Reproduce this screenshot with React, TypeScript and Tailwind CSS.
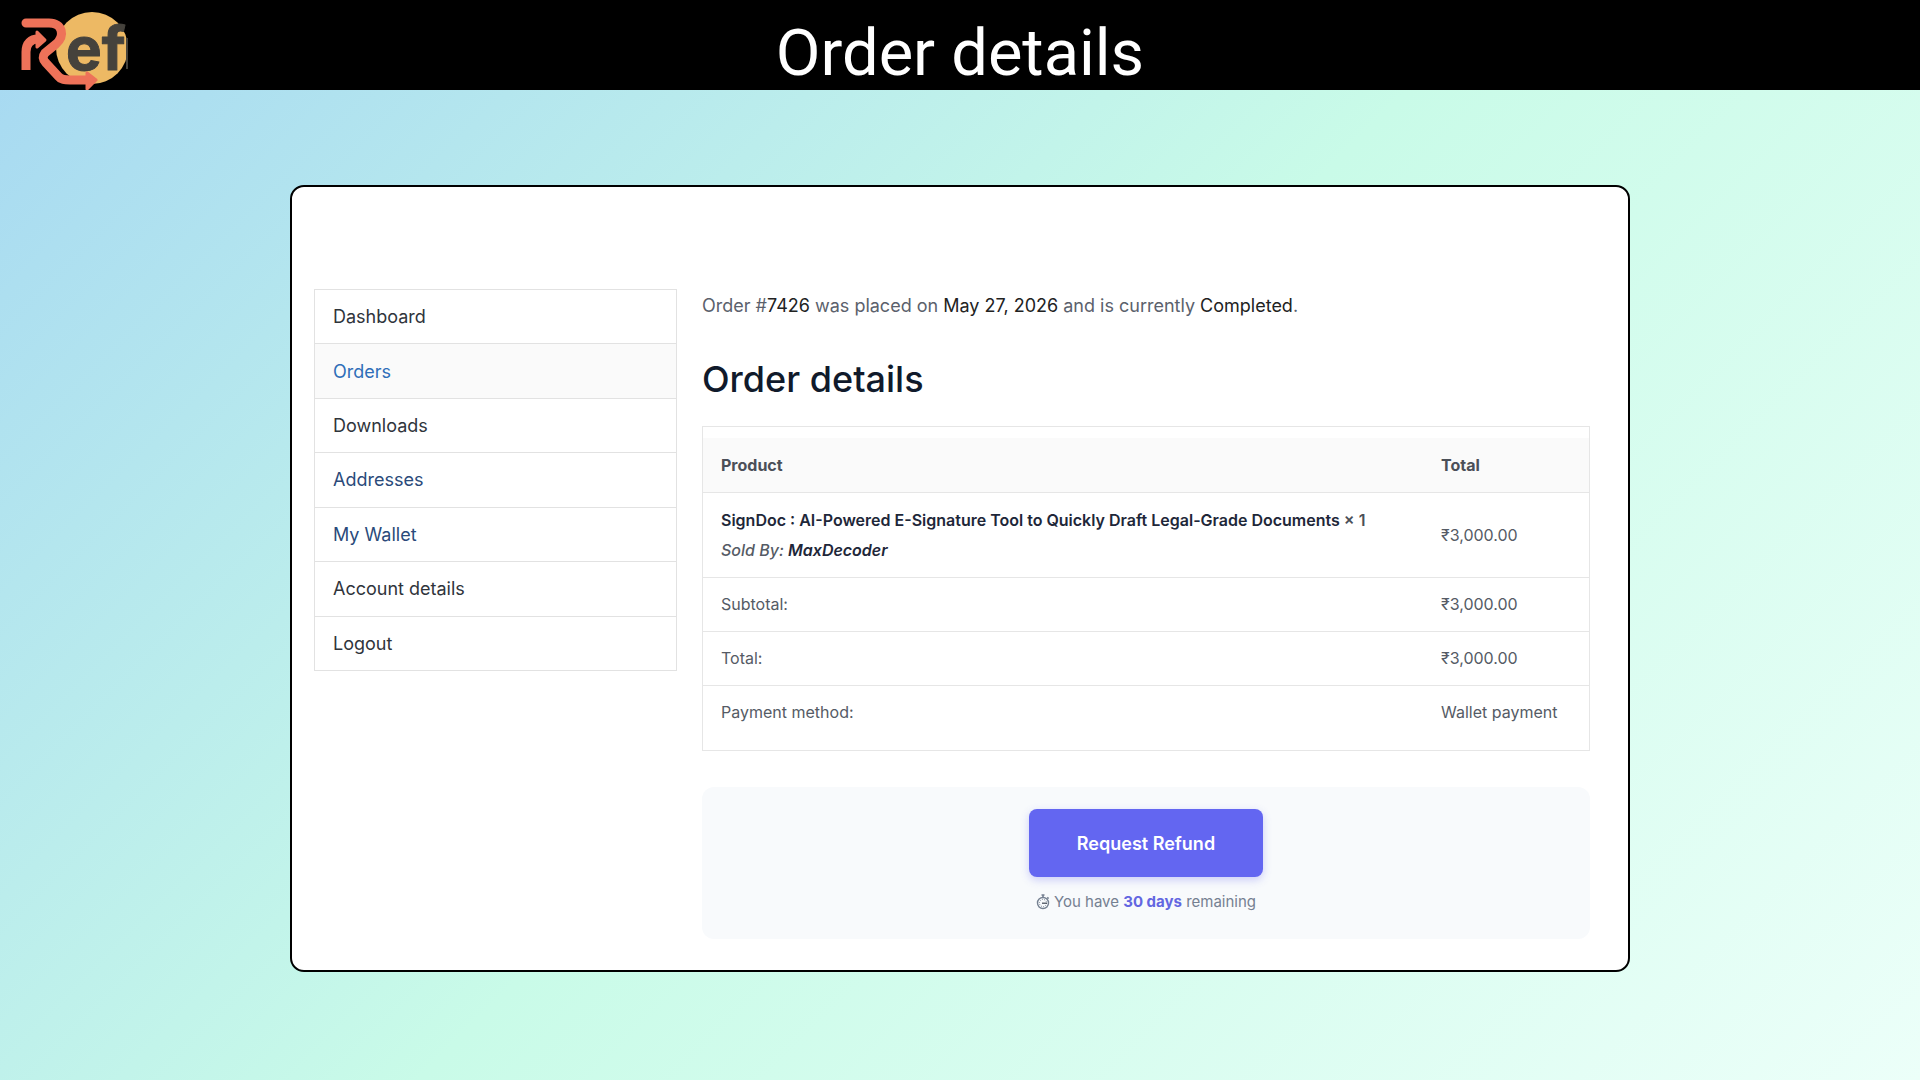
import React from 'react';

interface NavItem {
  label: string;
  className: string;
}

interface TotalRow {
  label: string;
  value: string;
  last?: boolean;
}

const navItems: NavItem[] = [
  { label: 'Dashboard', className: 'text-[#2f343b]' },
  { label: 'Orders', className: 'bg-[#fafafa] text-[#2f6eb8]' },
  { label: 'Downloads', className: 'text-[#2f343b]' },
  { label: 'Addresses', className: 'text-[#2a4a7a]' },
  { label: 'My Wallet', className: 'text-[#2a4a7a]' },
  { label: 'Account details', className: 'text-[#2f343b]' },
  { label: 'Logout', className: 'text-[#2f343b]' },
];

const totals: TotalRow[] = [
  { label: 'Subtotal:', value: '₹3,000.00' },
  { label: 'Total:', value: '₹3,000.00' },
  { label: 'Payment method:', value: 'Wallet payment', last: true },
];

const Logo: React.FC = () => (
  <svg viewBox="0 0 160 90" className="h-[90px] w-[160px]" role="img" aria-label="Ref">
    <circle cx="92" cy="48" r="36" fill="#edb964" />
    <g fill="none" stroke="#ee7259" strokeWidth="9" strokeLinejoin="round">
      <path d="M26 23 H49 C63 23 65 36 56 44 L45 53 C42 57 43 60 46 63 L58 76 C61 80 65 80 70 80 H88" strokeLinecap="round" />
      <path d="M26 70 V52 C26 43 31 39 38 39" />
    </g>
    <path d="M37 32 L45 40 L37 47 Z" fill="#ee7259" stroke="#ee7259" strokeWidth="3" strokeLinejoin="round" />
    <path d="M87 73 L96 80 L87 89 Z" fill="#ee7259" stroke="#ee7259" strokeWidth="3" strokeLinejoin="round" />
    <text
      x="66"
      y="70"
      fill="#45423c"
      stroke="#45423c"
      strokeWidth="1"
      strokeLinejoin="round"
      className="font-['Inter'] text-[60px] font-bold"
    >
      ef
    </text>
    <rect x="126" y="38" width="2" height="31" fill="#45423c" />
  </svg>
);

const AccountNav: React.FC = () => (
  <nav className="w-[363px] shrink-0">
    <ul className="flex h-[382px] flex-col divide-y divide-[#e2e2e2] border border-[#e2e2e2]">
      {navItems.map((item) => (
        <li key={item.label} className="flex-1">
          <a href="#" className={`flex h-full items-center px-[18px] text-[18px] ${item.className}`}>
            {item.label}
          </a>
        </li>
      ))}
    </ul>
  </nav>
);

const OrderTable: React.FC = () => (
  <div className="border border-[#e6e6e6] py-[11px]">
    <table className="w-full border-collapse text-left text-[16px] text-[#555b65]">
      <thead>
        <tr className="h-[54px] border-b border-[#e6e6e6] bg-[#fafafa] text-[#4b4f58]">
          <th className="px-[18px] font-bold">Product</th>
          <th className="w-[166px] px-[18px] font-bold">Total</th>
        </tr>
      </thead>
      <tbody>
        <tr className="h-[85px] border-b border-[#e6e6e6]">
          <td className="px-[18px] leading-[30px]">
            <p className="font-semibold text-[#4b4f58]">
              <a href="#" className="text-[#1e2739]">
                SignDoc : AI-Powered E-Signature Tool to Quickly Draft Legal-Grade Documents
              </a>{' '}
              × 1
            </p>
            <p className="font-medium italic">
              Sold By:{' '}
              <a href="#" className="font-semibold text-[#1e2739]">
                MaxDecoder
              </a>
            </p>
          </td>
          <td className="px-[18px]">₹3,000.00</td>
        </tr>
        {totals.map((row) => (
          <tr key={row.label} className={row.last ? 'h-[54px]' : 'h-[54px] border-b border-[#e6e6e6]'}>
            <th scope="row" className="px-[18px] font-normal">
              {row.label}
            </th>
            <td className="px-[18px] whitespace-nowrap">{row.value}</td>
          </tr>
        ))}
      </tbody>
    </table>
  </div>
);

const StopwatchIcon: React.FC = () => (
  <svg viewBox="0 0 14 16" className="h-4 w-[14px]" fill="none" stroke="currentColor" aria-hidden="true">
    <circle cx="7" cy="9" r="5.5" strokeWidth="1.4" />
    <circle cx="7" cy="9" r="3.6" strokeWidth="1" strokeDasharray="1 1.2" />
    <path d="M5.5 1h3M7 1v2.5M11.2 3.4l1.4 1.3" strokeWidth="1.6" />
    <path d="M6 9.2h5" stroke="#3c4450" strokeWidth="1.2" />
  </svg>
);

const RefundBox: React.FC = () => (
  <div className="mt-9 flex flex-col items-center rounded-xl bg-[#f8fafc] pt-[22px] pb-6">
    <button
      type="button"
      className="h-[68px] rounded-[8px] bg-[#6366f1] px-12 text-[18px] font-semibold text-white shadow-[0_3px_8px_rgba(99,102,241,0.3)]"
    >
      Request Refund
    </button>
    <p className="mt-3 flex items-center gap-1 text-[15px] leading-[26px] text-[#758091]">
      <StopwatchIcon />
      <span>
        You have <strong className="font-bold text-[#6366e1]">30 days</strong> remaining
      </span>
    </p>
  </div>
);

const App: React.FC = () => {
  return (
    <div className="flex min-h-screen flex-col bg-[linear-gradient(135deg,#a6d8f2_0%,#c9fbe8_50%,#ecfff9_100%)] font-['Inter',sans-serif]">
      <header className="grid h-[90px] grid-cols-[160px_1fr_160px] items-center bg-black">
        <Logo />
        <h1 className="pt-4 text-center font-['Roboto',sans-serif] text-[65px] leading-[72px] text-white">Order details</h1>
      </header>

      <main className="px-6 py-[95px]">
        <div className="mx-auto flex max-w-[1340px] gap-[25px] rounded-[14px] border-2 border-black bg-white pt-[102px] pr-[38px] pb-[31px] pl-[22px]">
          <AccountNav />
          <section className="min-w-0 flex-1">
            <p className="text-[18px] leading-[34px] text-[#5b616c]">
              Order #<span className="text-[#222]">7426</span> was placed on{' '}
              <span className="text-[#222]">May 27, 2026</span> and is currently{' '}
              <span className="text-[#222]">Completed</span>.
            </p>
            <h2 className="mt-[34px] mb-6 text-[36px] leading-[45px] font-medium text-[#101a2b]">Order details</h2>
            <OrderTable />
            <RefundBox />
          </section>
        </div>
      </main>
    </div>
  );
};

export default App;
